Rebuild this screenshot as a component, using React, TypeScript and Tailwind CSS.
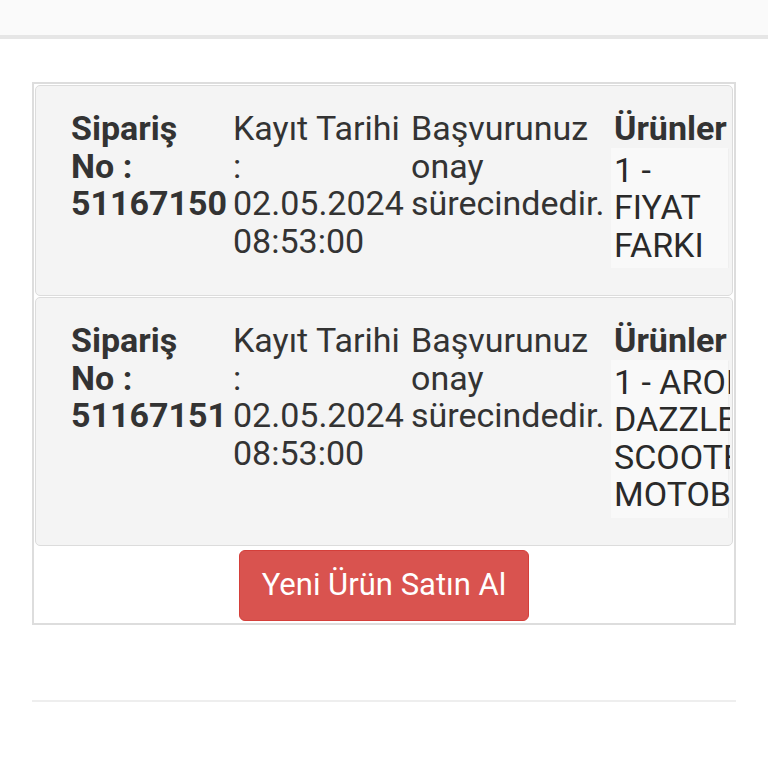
import React from 'react';

interface Order {
  no: string;
  date: string;
  time: string;
  products: string[];
}

const orders: Order[] = [
  { no: '51167150', date: '02.05.2024', time: '08:53:00', products: ['1 -', 'FIYAT', 'FARKI'] },
  { no: '51167151', date: '02.05.2024', time: '08:53:00', products: ['1 - AROMA', 'DAZZLE', 'SCOOTER', 'MOTOBİSİKLET'] },
];

const OrderCard: React.FC<{ order: Order }> = ({ order }) => {
  return (
    <div className="mx-px mt-px mb-[1px] flex rounded-[5px] border border-[#dcdcdc] bg-[#f4f4f4] pl-[35px] pt-[24px] pb-[27px] text-[34px] leading-[37.5px] text-[#333]">
      <div className="w-[162px] shrink-0 font-bold">
        Sipariş
        <br />
        No :
        <br />
        {order.no}
      </div>
      <div className="w-[178px] shrink-0">
        Kayıt Tarihi
        <br />:
        <br />
        {order.date}
        <br />
        {order.time}
      </div>
      <div className="w-[200px] shrink-0">
        Başvurunuz
        <br />
        onay
        <br />
        sürecindedir.
      </div>
      <div className="mr-[2px] min-w-0 flex-1 overflow-hidden">
        <div className="pl-[3px] font-bold">Ürünler</div>
        <div className="mr-[2px] bg-[#f9f9f9] pl-[3px] pt-[4px] pb-[4px] text-[#2a2a2a] whitespace-nowrap shadow-[0_1px_1px_rgba(0,0,0,0.12)]">
          {order.products.map(line => (
            <div key={line}>{line}</div>
          ))}
        </div>
      </div>
    </div>
  );
};

export default function App() {
  return (
    <div className="min-h-[768px] bg-white font-['Roboto',sans-serif]">
      <div className="h-[39px] border-b-[4px] border-[#e6e6e6] bg-[#fafafa]" />
      <div className="mx-[32px] mt-[43px] border-2 border-[#dddddd]">
        {orders.map(order => (
          <OrderCard key={order.no} order={order} />
        ))}
        <div className="flex justify-center pt-[3px] pb-[2px]">
          <button className="h-[71px] w-[290px] rounded-[6px] border border-[#d43f3a] bg-[#d9534f] text-[31px] text-white">
            Yeni Ürün Satın Al
          </button>
        </div>
      </div>
      <div className="mx-[32px] mt-[75px] h-[2px] bg-[#eeeeee]" />
    </div>
  );
}
